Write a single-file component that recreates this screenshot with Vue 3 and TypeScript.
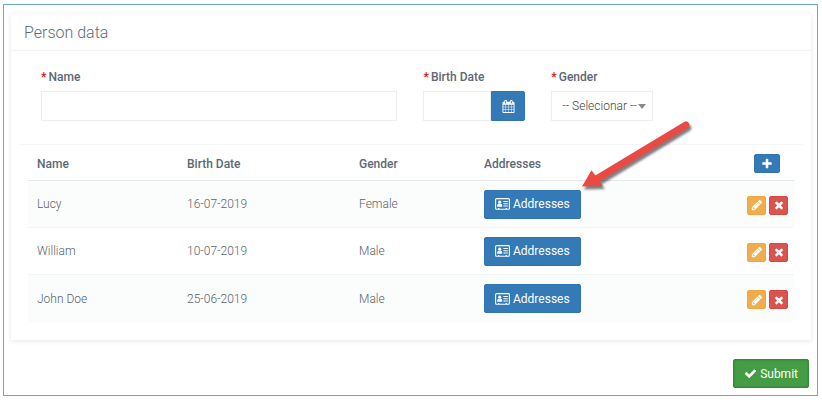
<script setup lang="ts">
import { ref } from 'vue'

interface Person {
  name: string
  birthDate: string
  gender: string
}

const name = ref('')
const birthDate = ref('')
const gender = ref('')

const people = ref<Person[]>([
  { name: 'Lucy', birthDate: '16-07-2019', gender: 'Female' },
  { name: 'William', birthDate: '10-07-2019', gender: 'Male' },
  { name: 'John Doe', birthDate: '25-06-2019', gender: 'Male' },
])

const icons = {
  check:
    'M1671 566q0 40-28 68l-724 724-136 136q-28 28-68 28t-68-28l-136-136-362-362q-28-28-28-68t28-68l136-136q28-28 68-28t68 28l294 295 656-657q28-28 68-28t68 28l136 136q28 28 28 68z',
  close:
    'M1490 1322q0 40-28 68l-136 136q-28 28-68 28t-68-28l-294-294-294 294q-28 28-68 28t-68-28l-136-136q-28-28-28-68t28-68l294-294-294-294q-28-28-28-68t28-68l136-136q28-28 68-28t68 28l294 294 294-294q28-28 68-28t68 28l136 136q28 28 28 68t-28 68l-294 294 294 294q28 28 28 68z',
  plus:
    'M1600 736v192q0 40-28 68t-68 28h-416v416q0 40-28 68t-68 28h-192q-40 0-68-28t-28-68v-416h-416q-40 0-68-28t-28-68v-192q0-40 28-68t68-28h416v-416q0-40 28-68t68-28h192q40 0 68 28t28 68v416h416q40 0 68 28t28 68z',
  pencil:
    'M491 1536l91-91-235-235-91 91v107h128v128h107zm523-928q0-22-22-22-10 0-17 7l-542 542q-7 7-7 17 0 22 22 22 10 0 17-7l542-542q7-7 7-17zm-54-192l416 416-832 832h-416v-416zm683 96q0 53-37 90l-166 166-416-416 166-165q36-38 90-38 53 0 91 38l235 234q37 39 37 91z',
  calendar:
    'M192 1664h288v-288h-288v288zm352 0h320v-288h-320v288zm-352-352h288v-320h-288v320zm352 0h320v-320h-320v320zm-352-384h288v-288h-288v288zm736 736h320v-288h-320v288zm-384-736h320v-288h-320v288zm768 736h288v-288h-288v288zm-384-352h320v-320h-320v320zm-352-864v-288q0-13-9.5-22.5t-22.5-9.5h-64q-13 0-22.5 9.5t-9.5 22.5v288q0 13 9.5 22.5t22.5 9.5h64q13 0 22.5-9.5t9.5-22.5zm736 864h288v-320h-288v320zm-384-384h320v-288h-320v288zm384 0h288v-288h-288v288zm32-480v-288q0-13-9.5-22.5t-22.5-9.5h-64q-13 0-22.5 9.5t-9.5 22.5v288q0 13 9.5 22.5t22.5 9.5h64q13 0 22.5-9.5t9.5-22.5zm384-64v1280q0 52-38 90t-90 38h-1408q-52 0-90-38t-38-90v-1280q0-52 38-90t90-38h128v-96q0-66 47-113t113-47h64q66 0 113 47t47 113v96h384v-96q0-66 47-113t113-47h64q66 0 113 47t47 113v96h128q52 0 90 38t38 90z',
}
</script>

<template>
  <form class="page" @submit.prevent>
    <section class="panel">
      <h1 class="panel-title">Person data</h1>

      <div class="fields">
        <div class="field">
          <label for="name"><span class="required">*</span>Name</label>
          <input id="name" v-model="name" class="control" type="text" />
        </div>
        <div class="field">
          <label for="birth-date"><span class="required">*</span>Birth Date</label>
          <div class="input-group">
            <input id="birth-date" v-model="birthDate" class="control" type="text" />
            <button class="btn primary date-btn" type="button" aria-label="Pick a date">
              <svg class="icon large" viewBox="0 0 1792 1792"><path :d="icons.calendar" /></svg>
            </button>
          </div>
        </div>
        <div class="field">
          <label for="gender"><span class="required">*</span>Gender</label>
          <div class="select-wrap">
            <select id="gender" v-model="gender" class="control">
              <option value="">-- Selecionar --</option>
              <option value="female">Female</option>
              <option value="male">Male</option>
            </select>
          </div>
        </div>
      </div>

      <div class="list">
        <table>
          <colgroup>
            <col class="col-name" />
            <col class="col-date" />
            <col class="col-gender" />
            <col />
            <col class="col-actions" />
          </colgroup>
          <thead>
            <tr>
              <th scope="col">Name</th>
              <th scope="col">Birth Date</th>
              <th scope="col">Gender</th>
              <th scope="col">Addresses</th>
              <th class="add-cell">
                <button class="btn primary small add" type="button" aria-label="Add person">
                  <svg class="icon" viewBox="0 0 1792 1792"><path :d="icons.plus" /></svg>
                </button>
              </th>
            </tr>
          </thead>
          <tbody>
            <tr v-for="person in people" :key="person.name">
              <td>{{ person.name }}</td>
              <td>{{ person.birthDate }}</td>
              <td>{{ person.gender }}</td>
              <td>
                <button class="btn primary" type="button">
                  <svg class="card-icon" viewBox="0 0 15 12">
                    <rect x="0.6" y="0.6" width="13.8" height="10.6" rx="1" fill="none" stroke="currentColor" stroke-width="1.1" />
                    <circle cx="4.7" cy="4.2" r="1.6" />
                    <path d="M2.2 8.8V7.6q0-1.8 1.3-1.9 1.2.8 2.4 0 1.3.1 1.3 1.9v1.2zM8.4 3h4.4v1H8.4zM8.4 5.2h4.4v1H8.4zM8.4 7.4h4.4v1H8.4zM3 10h1.4v1H3zM10.6 10H12v1h-1.4z" />
                  </svg>
                  <span>Addresses</span>
                </button>
              </td>
              <td>
                <div class="actions">
                  <button class="btn warning small" type="button" :aria-label="`Edit ${person.name}`">
                    <svg class="icon" viewBox="0 0 1792 1792"><path :d="icons.pencil" /></svg>
                  </button>
                  <button class="btn danger small" type="button" :aria-label="`Remove ${person.name}`">
                    <svg class="icon" viewBox="0 0 1792 1792"><path :d="icons.close" /></svg>
                  </button>
                </div>
              </td>
            </tr>
          </tbody>
        </table>
      </div>
    </section>

    <div class="footer">
      <button class="btn success" type="submit">
        <svg class="icon large" viewBox="0 0 1792 1792"><path :d="icons.check" /></svg>
        <span>Submit</span>
      </button>
    </div>

    <svg class="pointer" viewBox="0 0 120 80" aria-hidden="true">
      <path d="M3 66.5L12.5 50.3 16.3 55.5 105.5 1.7A3.5 3.5 0 0 1 109 7.7L20.5 61.5 24 66z" />
    </svg>
  </form>
</template>

<style>
body {
  margin: 0;
  background: #fff;
}
</style>

<style scoped>
*,
*::before,
*::after {
  box-sizing: border-box;
}

.page {
  position: relative;
  margin: 4px 4px 4px 3px;
  padding: 9px 6px 7px 7px;
  border: 1px solid #6fa6d8;
  font-family: Roboto, 'Liberation Sans', sans-serif;
  font-size: 12px;
  font-weight: 300;
  line-height: 16px;
  color: #5a626c;
}

.panel {
  padding-bottom: 18px;
  background: #fff;
  box-shadow: 0 1px 5px rgba(0, 0, 0, 0.1);
}

.panel-title {
  margin: 0;
  padding: 9px 13px 7px;
  border-bottom: 1px solid #f2f3f3;
  font-size: 16px;
  font-weight: 300;
  line-height: 20px;
  color: #5f6b77;
}

.fields {
  display: grid;
  grid-template-columns: 7fr 2fr 2fr 2fr;
  column-gap: 26px;
  padding: 18px 30px 23px;
}

.field {
  display: flex;
  flex-direction: column;
  gap: 6px;
  min-width: 0;
}

label,
th {
  font-weight: 500;
  color: #5d6874;
}

.required {
  margin-right: 2px;
  font-weight: 700;
  color: #d9201a;
}

.control {
  width: 100%;
  min-width: 0;
  height: 30px;
  padding: 0 10px;
  border: 1px solid #ebedee;
  border-radius: 0;
  background: #fff;
  font: inherit;
  color: #444;
  appearance: none;
}

.input-group {
  display: flex;
}

.select-wrap {
  position: relative;
}

.select-wrap::after {
  content: '';
  position: absolute;
  top: 13px;
  right: 7px;
  border: 4px solid transparent;
  border-top: 5px solid #8a8a8a;
  border-bottom: 0;
  pointer-events: none;
}

.list {
  margin: 0 8px;
  padding: 0 9px;
  border-top: 1px solid #f5f6f6;
}

table {
  width: 100%;
  table-layout: fixed;
  border-collapse: separate;
  border-spacing: 0;
}

.col-name {
  width: 150px;
}

.col-date {
  width: 172px;
}

.col-gender {
  width: 125px;
}

.col-actions {
  width: 70px;
}

th,
td {
  padding: 8px 9px;
  text-align: left;
  vertical-align: middle;
}

th {
  height: 36px;
  padding-top: 8px;
  padding-bottom: 6px;
  border-bottom: 1px solid #e6e9e9;
}

td {
  height: 47px;
  border-bottom: 1px solid #f3f5f5;
}

tbody tr:nth-child(odd) {
  background: #fbfdfc;
}

tbody tr:last-child td {
  border-bottom: 0;
}

td:last-child {
  padding-right: 6px;
}

.btn {
  display: inline-flex;
  align-items: center;
  justify-content: center;
  gap: 3px;
  height: 29px;
  padding: 0 10px;
  border: 1px solid transparent;
  border-radius: 2px;
  font: inherit;
  font-weight: 400;
  color: #fff;
  cursor: pointer;
  vertical-align: middle;
}

.primary {
  border-color: #3075b1;
  background: #337ab7;
}

.warning {
  border-color: #efa740;
  background: #f0ad4e;
}

.danger {
  border-color: #d64844;
  background: #d9534f;
}

.success {
  border-color: #35873a;
  background: #449d44;
  box-shadow: inset 0 0 2px #2c7a30;
}

.small {
  width: 19px;
  height: 19px;
  padding: 0;
}

.add {
  width: 26px;
}

th.add-cell {
  padding-right: 14px;
  text-align: right;
}

.date-btn {
  flex: none;
  width: 34px;
  height: 30px;
  border-radius: 0 2px 2px 0;
}

.icon {
  width: 12px;
  height: 12px;
  flex: none;
  fill: currentColor;
}

.large {
  width: 13px;
  height: 13px;
}

.card-icon {
  width: 15px;
  height: 12px;
  flex: none;
  fill: currentColor;
}

.actions {
  display: flex;
  justify-content: flex-end;
  gap: 3px;
  padding-top: 2px;
}

.footer {
  display: flex;
  justify-content: flex-end;
  padding: 19px 2px 0 0;
}

/* Callout arrow laid over the list */
.pointer {
  position: absolute;
  top: 115px;
  right: 118px;
  width: 120px;
  height: 80px;
  overflow: visible;
  fill: #e94b44;
  filter: drop-shadow(2px 3px 1px rgba(0, 0, 0, 0.5));
  pointer-events: none;
}
</style>
